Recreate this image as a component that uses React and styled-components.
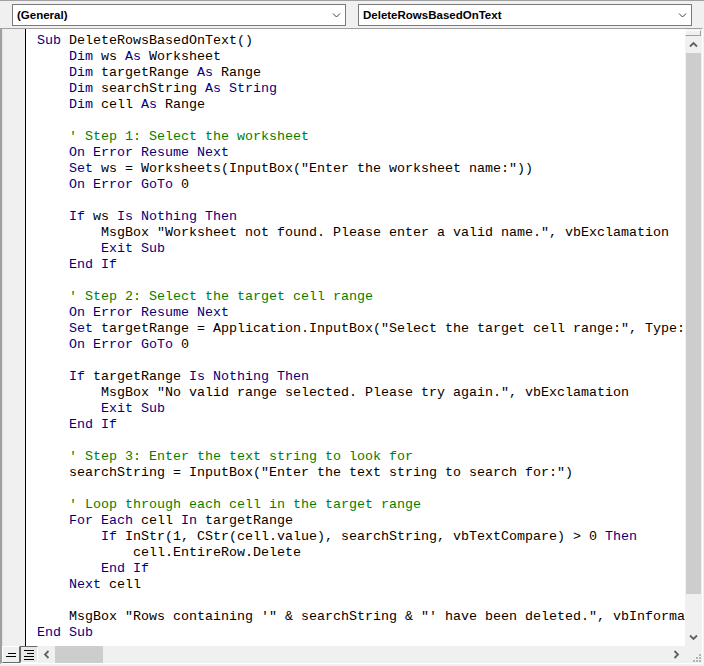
import React from "react";
import styled, { createGlobalStyle } from "styled-components";

const GlobalStyle = createGlobalStyle`
  html, body {
    margin: 0;
    padding: 0;
    background: #f0f0f0;
  }
`;

const Window = styled.div`
  width: 704px;
  height: 666px;
  box-sizing: border-box;
  background: #f0f0f0;
  border-top: 1px solid #a0a0a0;
  display: flex;
  flex-direction: column;
  overflow: hidden;
`;

const Toolbar = styled.div`
  height: 27px;
  box-sizing: border-box;
  padding: 3px 13px 0 12px;
  display: flex;
  gap: 12px;
`;

const Combo = styled.div`
  flex: 0 0 ${(p) => p.width}px;
  height: 22px;
  box-sizing: border-box;
  border: 1px solid #7a7a7a;
  background: #fff;
  display: flex;
  align-items: center;
  justify-content: space-between;
  padding: 0 4px 0 4px;
  font-family: "Liberation Sans", Arial, sans-serif;
  font-weight: bold;
  font-size: 11.5px;
  color: #000;
`;

const CodeWindow = styled.div`
  flex: 1;
  margin: 0 1px 2px 0;
  box-sizing: border-box;
  border-top: 1px solid #a0a0a0;
  border-left: 2px solid #a0a0a0;
  border-right: 1px solid #ffffff;
  border-bottom: 1px solid #ffffff;
  display: grid;
  grid-template-columns: 1fr 17px;
  grid-template-rows: 1fr 17px;
  min-height: 0;
`;

const Editor = styled.div`
  display: flex;
  min-width: 0;
  min-height: 0;
  overflow: hidden;
  background: #fff;
`;

const Margin = styled.div`
  flex: 0 0 22px;
  background: #f0f0f0;
  border-left: 1px solid #e3e3e3;
  border-right: 1px solid #000;
`;

const Code = styled.pre`
  margin: 0;
  padding: 4px 0 0 11px;
  flex: 1;
  overflow: hidden;
  font-family: "Liberation Mono", "Courier New", monospace;
  font-size: 13.33px;
  line-height: 16px;
  color: #000;
  white-space: pre;
`;

const Keyword = styled.span`
  color: #00007f;
`;

const Comment = styled.span`
  color: #007f00;
`;

const VScroll = styled.div`
  background: #f0f0f0;
  display: flex;
  flex-direction: column;
  min-height: 0;
`;

const Splitter = styled.div`
  height: 6px;
  margin: 1px 1px 0 0;
  box-sizing: border-box;
  background: #f0f0f0;
  border: 1px solid #ffffff;
  border-right-color: #a0a0a0;
  border-bottom-color: #a0a0a0;
`;

const ArrowButton = styled.div`
  flex: 0 0 ${(p) => p.size || 17}px;
  width: ${(p) => (p.horizontal ? `${p.size || 17}px` : "auto")};
  display: flex;
  align-items: center;
  justify-content: center;
`;

const Track = styled.div`
  flex: 1;
  display: flex;
  flex-direction: ${(p) => (p.horizontal ? "row" : "column")};
`;

const Thumb = styled.div`
  flex: 0 0 ${(p) => p.length}px;
  background: #cdcdcd;
  margin: ${(p) => (p.horizontal ? "0" : "0 1px")};
`;

const BottomBar = styled.div`
  display: flex;
  align-items: stretch;
  background: #f0f0f0;
  min-width: 0;
`;

const ViewButton = styled.div`
  flex: 0 0 18px;
  box-sizing: border-box;
  display: flex;
  align-items: center;
  justify-content: center;
  background: ${(p) => (p.active ? "#f0f0f0" : "#e8e8e8")};
  border: 1px solid;
  border-color: ${(p) =>
    p.active ? "#ffffff #696969 #696969 #ffffff" : "#696969 #ffffff #ffffff #696969"};
`;

const HScroll = styled.div`
  flex: 1;
  display: flex;
  align-items: stretch;
`;

const Grip = styled.div`
  background: #f0f0f0;
  display: flex;
  align-items: flex-end;
  justify-content: flex-end;
`;

const Chevron = ({ dir = "down", color = "#606060", thin }) => {
  const rot = { down: 0, up: 180, left: 90, right: -90 }[dir];
  return (
    <svg width="9" height="9" viewBox="0 0 9 9" style={{ transform: `rotate(${rot}deg)` }}>
      <path
        d="M1 2.5 L4.5 6 L8 2.5"
        fill="none"
        stroke={color}
        strokeWidth={thin ? 1 : 1.8}
      />
    </svg>
  );
};

const KEYWORDS = new Set([
  "Sub", "Dim", "As", "String", "On", "Error", "Resume", "Next", "Set",
  "GoTo", "If", "Is", "Nothing", "Then", "Exit", "End", "For", "Each", "In",
]);

// lines are kept as far as the editor shows them; the rest is off to the right
const lines = [
  "Sub DeleteRowsBasedOnText()",
  "    Dim ws As Worksheet",
  "    Dim targetRange As Range",
  "    Dim searchString As String",
  "    Dim cell As Range",
  "",
  "    ' Step 1: Select the worksheet",
  "    On Error Resume Next",
  '    Set ws = Worksheets(InputBox("Enter the worksheet name:"))',
  "    On Error GoTo 0",
  "",
  "    If ws Is Nothing Then",
  '        MsgBox "Worksheet not found. Please enter a valid name.", vbExclamation',
  "        Exit Sub",
  "    End If",
  "",
  "    ' Step 2: Select the target cell range",
  "    On Error Resume Next",
  '    Set targetRange = Application.InputBox("Select the target cell range:", Type:',
  "    On Error GoTo 0",
  "",
  "    If targetRange Is Nothing Then",
  '        MsgBox "No valid range selected. Please try again.", vbExclamation',
  "        Exit Sub",
  "    End If",
  "",
  "    ' Step 3: Enter the text string to look for",
  '    searchString = InputBox("Enter the text string to search for:")',
  "",
  "    ' Loop through each cell in the target range",
  "    For Each cell In targetRange",
  "        If InStr(1, CStr(cell.value), searchString, vbTextCompare) > 0 Then",
  "            cell.EntireRow.Delete",
  "        End If",
  "    Next cell",
  "",
  '    MsgBox "Rows containing \'" & searchString & "\' have been deleted.", vbInforma',
  "End Sub",
];

const renderLine = (line, i) => {
  const parts = [];
  const re = /("[^"]*"|'.*$|[A-Za-z_][A-Za-z0-9_]*|\s+|.)/g;
  let m;
  let k = 0;
  while ((m = re.exec(line))) {
    const t = m[0];
    if (t.startsWith("'")) parts.push(<Comment key={k++}>{t}</Comment>);
    else if (KEYWORDS.has(t)) parts.push(<Keyword key={k++}>{t}</Keyword>);
    else parts.push(t);
  }
  return (
    <React.Fragment key={i}>
      {parts}
      {"\n"}
    </React.Fragment>
  );
};

const ProcViewIcon = () => (
  <svg width="12" height="10" viewBox="0 0 12 10">
    <path d="M3 3.5 H11 M1 6.5 H11" stroke="#000" strokeWidth="1" />
  </svg>
);

const ModuleViewIcon = () => (
  <svg width="12" height="12" viewBox="0 0 12 12">
    <path d="M1 1.5 H11 M4 4.5 H11 M1 7.5 H11 M1 10.5 H11" stroke="#000" strokeWidth="1" />
  </svg>
);

const GripIcon = () => (
  <svg width="12" height="12" viewBox="0 0 12 12">
    {[
      [9, 3], [6, 6], [9, 6], [3, 9], [6, 9], [9, 9],
    ].map(([x, y]) => (
      <rect key={`${x}-${y}`} x={x} y={y} width="2" height="2" fill="#b4b4b4" />
    ))}
  </svg>
);

export default function App() {
  return (
    <>
      <GlobalStyle />
      <Window>
        <Toolbar>
          <Combo width={334}>
            <span>(General)</span>
            <Chevron thin color="#404040" />
          </Combo>
          <Combo width={334}>
            <span>DeleteRowsBasedOnText</span>
            <Chevron thin color="#404040" />
          </Combo>
        </Toolbar>
        <CodeWindow>
          <Editor>
            <Margin />
            <Code>{lines.map(renderLine)}</Code>
          </Editor>
          <VScroll>
            <Splitter />
            <ArrowButton>
              <Chevron dir="up" />
            </ArrowButton>
            <Track>
              <Thumb length={541} />
            </Track>
            <ArrowButton>
              <Chevron dir="down" />
            </ArrowButton>
          </VScroll>
          <BottomBar>
            <ViewButton active>
              <ProcViewIcon />
            </ViewButton>
            <ViewButton>
              <ModuleViewIcon />
            </ViewButton>
            <HScroll>
              <ArrowButton horizontal>
                <Chevron dir="left" />
              </ArrowButton>
              <Track horizontal>
                <Thumb horizontal length={48} />
              </Track>
              <ArrowButton horizontal>
                <Chevron dir="right" />
              </ArrowButton>
            </HScroll>
          </BottomBar>
          <Grip>
            <GripIcon />
          </Grip>
        </CodeWindow>
      </Window>
    </>
  );
}
